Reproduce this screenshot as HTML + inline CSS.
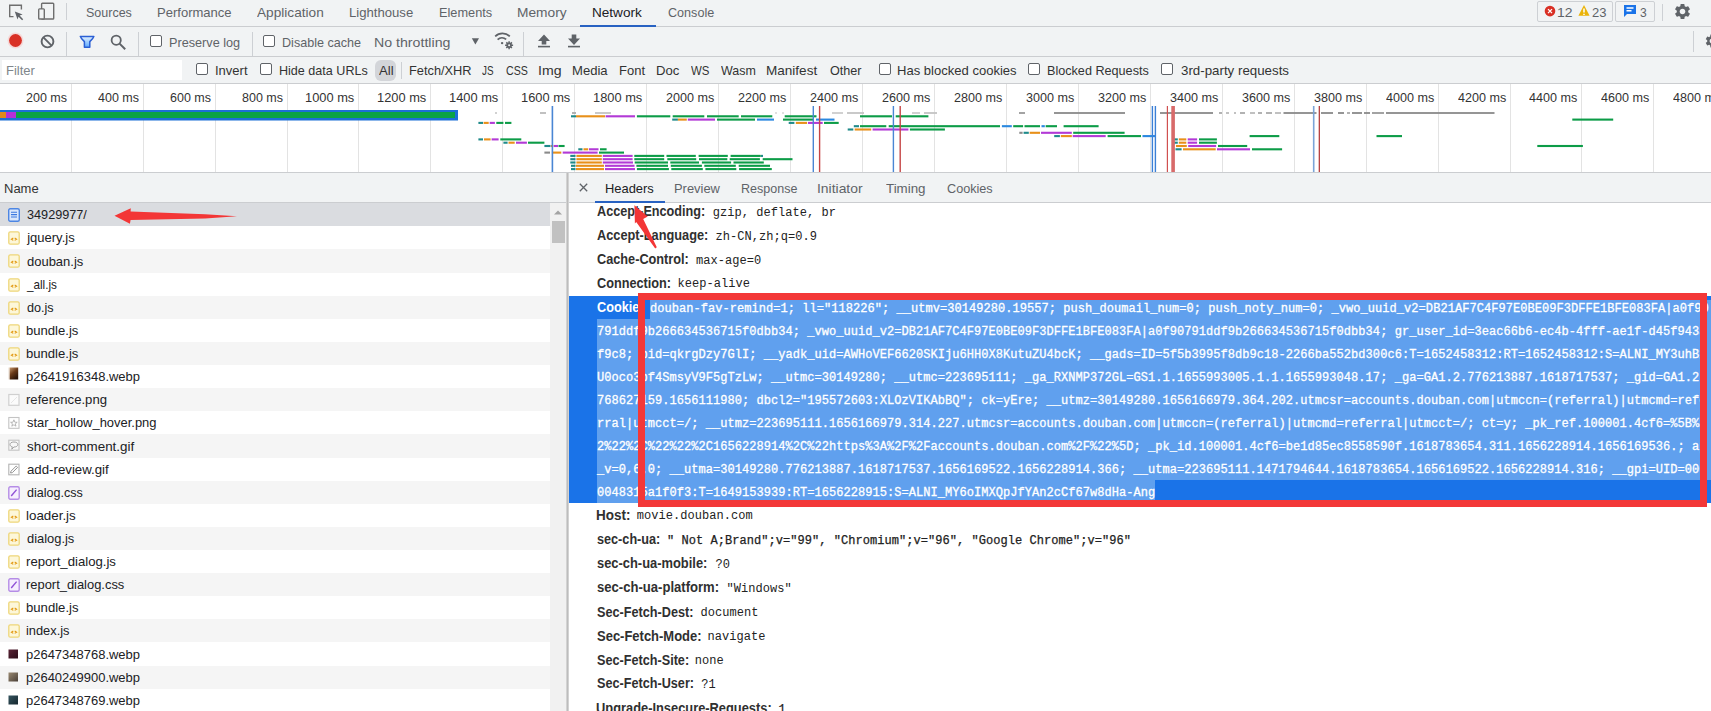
<!DOCTYPE html><html><head><meta charset="utf-8"><style>
html,body{margin:0;padding:0;width:1711px;height:711px;overflow:hidden;background:#fff;font-family:'Liberation Sans', sans-serif}
.t{position:absolute;white-space:nowrap;line-height:20px}
.r{position:absolute;box-sizing:content-box}
</style></head><body><div class="r" style="left:0px;top:0px;width:1711px;height:26px;background:#f1f3f4;"></div><div class="r" style="left:0px;top:26px;width:1711px;height:1px;background:#cbcdd0;"></div><svg class="r" style="left:0;top:0" width="30" height="26" viewBox="0 0 30 26">
<path d="M13.5 16.6 H9.7 V5.3 H21.4 V9.5" fill="none" stroke="#6e6e6e" stroke-width="1.4"/>
<path d="M14.8 11.5 L22.6 14.6 L19.6 15.6 L23.2 19.2 L22.1 20.3 L18.5 16.7 L17.5 19.6 Z" fill="#5f6368"/>
</svg><svg class="r" style="left:30px;top:0" width="30" height="26" viewBox="0 0 30 26">
<rect x="11.6" y="3.2" width="12.1" height="15.8" rx="0.8" fill="none" stroke="#6e6e6e" stroke-width="1.4"/>
<rect x="8.7" y="8.9" width="5.6" height="10.1" rx="0.8" fill="#f1f3f4" stroke="#6e6e6e" stroke-width="1.4"/>
</svg><div class="r" style="left:66px;top:3px;width:1px;height:17px;background:#cdd0d4;"></div><div class="t" style="left:85.74px;top:2.80px;font-size:13px;color:#5f6368;font-weight:normal;font-family:'Liberation Sans', sans-serif;transform:scaleX(0.9617);transform-origin:0 0;">Sources</div><div class="t" style="left:156.80px;top:2.80px;font-size:13px;color:#5f6368;font-weight:normal;font-family:'Liberation Sans', sans-serif;transform:scaleX(1.0027);transform-origin:0 0;">Performance</div><div class="t" style="left:256.80px;top:2.80px;font-size:13px;color:#5f6368;font-weight:normal;font-family:'Liberation Sans', sans-serif;transform:scaleX(1.0492);transform-origin:0 0;">Application</div><div class="t" style="left:348.69px;top:2.80px;font-size:13px;color:#5f6368;font-weight:normal;font-family:'Liberation Sans', sans-serif;transform:scaleX(1.0095);transform-origin:0 0;">Lighthouse</div><div class="t" style="left:439.22px;top:2.80px;font-size:13px;color:#5f6368;font-weight:normal;font-family:'Liberation Sans', sans-serif;transform:scaleX(0.9811);transform-origin:0 0;">Elements</div><div class="t" style="left:516.94px;top:2.80px;font-size:13px;color:#5f6368;font-weight:normal;font-family:'Liberation Sans', sans-serif;transform:scaleX(1.0565);transform-origin:0 0;">Memory</div><div class="t" style="left:591.96px;top:2.80px;font-size:13px;color:#202124;font-weight:normal;font-family:'Liberation Sans', sans-serif;transform:scaleX(1.0426);transform-origin:0 0;">Network</div><div class="t" style="left:668.30px;top:2.80px;font-size:13px;color:#5f6368;font-weight:normal;font-family:'Liberation Sans', sans-serif;transform:scaleX(0.9688);transform-origin:0 0;">Console</div><div class="r" style="left:580px;top:25px;width:76px;height:2px;background:#2862c2;"></div><div class="r" style="left:1537px;top:1px;width:74px;height:19px;border:1px solid #cdd0d4;border-radius:2px;background:#f1f3f4"></div><div class="r" style="left:1615px;top:1px;width:38px;height:19px;border:1px solid #cdd0d4;border-radius:2px;background:#f1f3f4"></div><svg class="r" style="left:1543px;top:5px" width="13" height="13" viewBox="0 0 13 13"><circle cx="7" cy="6.1" r="5.3" fill="#d93025"/><path d="M5 4.1 L9 8.1 M9 4.1 L5 8.1" stroke="#fff" stroke-width="1.3"/></svg><div class="t" style="left:1556.92px;top:2.50px;font-size:13px;color:#5f6368;font-weight:normal;font-family:'Liberation Sans', sans-serif;transform:scaleX(1.0769);transform-origin:0 0;">12</div><svg class="r" style="left:1577px;top:4px" width="14" height="13" viewBox="0 0 14 13"><path d="M7 1 L12.6 11.8 H1.4 Z" fill="#eab308"/><path d="M7 4.5 V8.5 M7 9.8 V11" stroke="#fff" stroke-width="1.5"/></svg><div class="t" style="left:1592.00px;top:2.50px;font-size:13px;color:#5f6368;font-weight:normal;font-family:'Liberation Sans', sans-serif;transform:scaleX(1.0000);transform-origin:0 0;">23</div><svg class="r" style="left:1623px;top:4px" width="14" height="14" viewBox="0 0 14 14"><path d="M1 1 H13 V10 H4 L1 13 Z" fill="#1a73e8"/><path d="M3.5 4 H10.5 M3.5 6.8 H8.5" stroke="#fff" stroke-width="1.4"/></svg><div class="t" style="left:1640.00px;top:2.50px;font-size:13px;color:#5f6368;font-weight:normal;font-family:'Liberation Sans', sans-serif;transform:scaleX(0.9286);transform-origin:0 0;">3</div><div class="r" style="left:1662px;top:4px;width:1px;height:17px;background:#cdd0d4;"></div><svg class="r" style="left:1673px;top:2px" width="19" height="19" viewBox="0 0 24 24"><path fill="#5f6368" d="M19.14 12.94c.04-.3.06-.61.06-.94 0-.32-.02-.64-.07-.94l2.03-1.58a.49.49 0 0 0 .12-.61l-1.92-3.32a.488.488 0 0 0-.59-.22l-2.39.96c-.5-.38-1.03-.7-1.62-.94l-.36-2.54a.484.484 0 0 0-.48-.41h-3.84c-.24 0-.43.17-.47.41l-.36 2.54c-.59.24-1.13.57-1.62.94l-2.39-.96c-.22-.08-.47 0-.59.22L2.74 8.87c-.12.21-.08.47.12.61l2.03 1.58c-.05.3-.09.63-.09.94s.02.64.07.94l-2.03 1.58a.49.49 0 0 0-.12.61l1.92 3.32c.12.22.37.29.59.22l2.39-.96c.5.38 1.03.7 1.62.94l.36 2.54c.05.24.24.41.48.41h3.84c.24 0 .44-.17.47-.41l.36-2.54c.59-.24 1.13-.56 1.62-.94l2.39.96c.22.08.47 0 .59-.22l1.92-3.32c.12-.22.07-.47-.12-.61l-2.01-1.58zM12 15.6c-1.98 0-3.6-1.62-3.6-3.6s1.62-3.6 3.6-3.6 3.6 1.62 3.6 3.6-1.62 3.6-3.6 3.6z"/></svg><div class="r" style="left:0px;top:27px;width:1711px;height:29px;background:#f1f3f4;"></div><div class="r" style="left:0px;top:56px;width:1711px;height:1px;background:#cbcdd0;"></div><svg class="r" style="left:7px;top:32px" width="17" height="17" viewBox="0 0 17 17"><circle cx="8.5" cy="8.5" r="8" fill="#f8c8c6" opacity="0.6"/><circle cx="8.5" cy="8.5" r="6.4" fill="#d93025"/></svg><svg class="r" style="left:38.5px;top:32.5px" width="17" height="17" viewBox="0 0 17 17"><circle cx="8.5" cy="8.5" r="5.9" fill="none" stroke="#5f6368" stroke-width="1.9"/><path d="M4.4 4.4 L12.6 12.6" stroke="#5f6368" stroke-width="1.9"/></svg><div class="r" style="left:66px;top:32px;width:1px;height:24px;background:#cdd0d4;"></div><svg class="r" style="left:79px;top:35px" width="16" height="14" viewBox="0 0 16 14"><defs><linearGradient id="fg" x1="0" y1="0" x2="0" y2="1"><stop offset="0" stop-color="#e4f2ff"/><stop offset="1" stop-color="#5aa8ff"/></linearGradient></defs><path d="M1.3 1.4 H14.9 C14.4 3.2 12.6 5 10.8 6.6 V12.3 H5.4 V6.6 C3.6 5 1.8 3.2 1.3 1.4 Z" fill="url(#fg)" stroke="#2b5fd4" stroke-width="1.5" stroke-linejoin="round"/></svg><svg class="r" style="left:109.5px;top:34px" width="17" height="16" viewBox="0 0 17 16"><circle cx="6.2" cy="6.2" r="4.6" fill="none" stroke="#5f6368" stroke-width="1.8"/><path d="M9.6 9.6 L15.2 15.2" stroke="#5f6368" stroke-width="2"/></svg><div class="r" style="left:138px;top:32px;width:1px;height:24px;background:#cdd0d4;"></div><div class="r" style="left:150px;top:35px;width:10px;height:10px;border:1px solid #5f6368;border-radius:2px;background:#fff"></div><div class="t" style="left:169.22px;top:32.50px;font-size:13px;color:#5f6368;font-weight:normal;font-family:'Liberation Sans', sans-serif;transform:scaleX(0.9750);transform-origin:0 0;">Preserve log</div><div class="r" style="left:252px;top:32px;width:1px;height:24px;background:#cdd0d4;"></div><div class="r" style="left:263px;top:35px;width:10px;height:10px;border:1px solid #5f6368;border-radius:2px;background:#fff"></div><div class="t" style="left:282.43px;top:32.50px;font-size:13px;color:#5f6368;font-weight:normal;font-family:'Liberation Sans', sans-serif;transform:scaleX(0.9679);transform-origin:0 0;">Disable cache</div><div class="t" style="left:374.01px;top:32.50px;font-size:13px;color:#5f6368;font-weight:normal;font-family:'Liberation Sans', sans-serif;transform:scaleX(1.0899);transform-origin:0 0;">No throttling</div><svg class="r" style="left:471px;top:38px" width="9" height="8" viewBox="0 0 9 8"><path d="M0.8 0.3 H8 L4.4 6.6 Z" fill="#5f6368"/></svg><svg class="r" style="left:490px;top:30px" width="26" height="22" viewBox="0 0 26 22">
<path d="M5.2 6.3 A10.5 10.5 0 0 1 19.8 6.3" fill="none" stroke="#5f6368" stroke-width="1.7"/>
<path d="M7.6 9.6 A6.5 6.5 0 0 1 16.2 9.4" fill="none" stroke="#5f6368" stroke-width="1.7"/>
<circle cx="12.1" cy="13.1" r="1.2" fill="#5f6368"/>
<g transform="translate(19.1 15.2)"><circle r="2.7" fill="#5f6368"/><path d="M0 -4 V4 M-4 0 H4 M-2.8 -2.8 L2.8 2.8 M2.8 -2.8 L-2.8 2.8" stroke="#5f6368" stroke-width="1.5"/><circle r="1" fill="#f1f3f4"/></g>
</svg><div class="r" style="left:523px;top:32px;width:1px;height:24px;background:#cdd0d4;"></div><svg class="r" style="left:537px;top:34px" width="14" height="14" viewBox="0 0 14 14"><path d="M7 0.5 L13 7 H9.3 V10.5 H4.7 V7 H1 Z" fill="#5f6368"/><rect x="1" y="11.8" width="12" height="1.6" fill="#5f6368"/></svg><svg class="r" style="left:567px;top:34px" width="14" height="14" viewBox="0 0 14 14"><path d="M4.7 0.5 H9.3 V4.5 H13 L7 11 L1 4.5 H4.7 Z" fill="#5f6368"/><rect x="1" y="11.8" width="12" height="1.6" fill="#5f6368"/></svg><div class="r" style="left:1693px;top:31px;width:1px;height:21px;background:#cdd0d4;"></div><svg class="r" style="left:1704px;top:33px" width="16" height="16" viewBox="0 0 24 24"><path fill="#5f6368" d="M19.14 12.94c.04-.3.06-.61.06-.94 0-.32-.02-.64-.07-.94l2.03-1.58a.49.49 0 0 0 .12-.61l-1.92-3.32a.488.488 0 0 0-.59-.22l-2.39.96c-.5-.38-1.030-.7-1.62-.94l-.36-2.54a.484.484 0 0 0-.48-.41h-3.84c-.24 0-.43.17-.47.41l-.36 2.54c-.59.24-1.13.57-1.62.94l-2.39-.96c-.22-.08-.47 0-.59.22L2.74 8.87c-.12.21-.08.47.12.61l2.03 1.58c-.05.3-.09.63-.09.94s.02.64.07.94l-2.03 1.58a.49.49 0 0 0-.12.61l1.920 3.32c.12.22.37.29.59.22l2.39-.96c.5.38 1.03.7 1.62.94l.36 2.54c.05.24.24.41.48.41h3.84c.24 0 .44-.17.47-.41l.36-2.54c.59-.24 1.13-.56 1.62-.94l2.39.96c.22.08.47 0 .59-.22l1.92-3.32c.12-.22.07-.47-.12-.61l-2.01-1.58zM12 15.6c-1.98 0-3.6-1.62-3.6-3.6s1.62-3.6 3.6-3.6 3.6 1.62 3.6 3.6-1.62 3.6-3.6 3.6z"/></svg><div class="r" style="left:0px;top:57px;width:1711px;height:26px;background:#f1f3f4;"></div><div class="r" style="left:0px;top:83px;width:1711px;height:1px;background:#cbcdd0;"></div><div class="r" style="left:2px;top:60px;width:180px;height:20px;background:#ffffff;"></div><div class="t" style="left:6.00px;top:60.50px;font-size:13px;color:#80868b;font-weight:normal;font-family:'Liberation Sans', sans-serif;">Filter</div><div class="r" style="left:196px;top:63px;width:10px;height:10px;border:1px solid #5f6368;border-radius:2px;background:#fff"></div><div class="t" style="left:215.00px;top:60.50px;font-size:13px;color:#333;font-weight:normal;font-family:'Liberation Sans', sans-serif;transform:scaleX(1.0000);transform-origin:0 0;">Invert</div><div class="r" style="left:260px;top:63px;width:10px;height:10px;border:1px solid #5f6368;border-radius:2px;background:#fff"></div><div class="t" style="left:279.03px;top:60.50px;font-size:13px;color:#333;font-weight:normal;font-family:'Liberation Sans', sans-serif;transform:scaleX(0.9670);transform-origin:0 0;">Hide data URLs</div><div class="r" style="left:375px;top:60px;width:21px;height:21px;border-radius:6px;background:#d3d5d9"></div><div class="t" style="left:378.60px;top:60.50px;font-size:13px;color:#333;font-weight:normal;font-family:'Liberation Sans', sans-serif;transform:scaleX(1.0071);transform-origin:0 0;">All</div><div class="r" style="left:401px;top:62px;width:1px;height:17px;background:#cdd0d4;"></div><div class="t" style="left:409.02px;top:60.50px;font-size:13px;color:#333;font-weight:normal;font-family:'Liberation Sans', sans-serif;transform:scaleX(0.9839);transform-origin:0 0;">Fetch/XHR</div><div class="t" style="left:482.40px;top:60.50px;font-size:13px;color:#333;font-weight:normal;font-family:'Liberation Sans', sans-serif;transform:scaleX(0.7600);transform-origin:0 0;">JS</div><div class="t" style="left:505.70px;top:60.50px;font-size:13px;color:#333;font-weight:normal;font-family:'Liberation Sans', sans-serif;transform:scaleX(0.8192);transform-origin:0 0;">CSS</div><div class="t" style="left:537.71px;top:60.50px;font-size:13px;color:#333;font-weight:normal;font-family:'Liberation Sans', sans-serif;transform:scaleX(1.0850);transform-origin:0 0;">Img</div><div class="t" style="left:571.79px;top:60.50px;font-size:13px;color:#333;font-weight:normal;font-family:'Liberation Sans', sans-serif;transform:scaleX(1.0057);transform-origin:0 0;">Media</div><div class="t" style="left:619.00px;top:60.50px;font-size:13px;color:#333;font-weight:normal;font-family:'Liberation Sans', sans-serif;transform:scaleX(1.0000);transform-origin:0 0;">Font</div><div class="t" style="left:655.79px;top:60.50px;font-size:13px;color:#333;font-weight:normal;font-family:'Liberation Sans', sans-serif;transform:scaleX(1.0091);transform-origin:0 0;">Doc</div><div class="t" style="left:691.00px;top:60.50px;font-size:13px;color:#333;font-weight:normal;font-family:'Liberation Sans', sans-serif;transform:scaleX(0.8810);transform-origin:0 0;">WS</div><div class="t" style="left:721.00px;top:60.50px;font-size:13px;color:#333;font-weight:normal;font-family:'Liberation Sans', sans-serif;transform:scaleX(0.9583);transform-origin:0 0;">Wasm</div><div class="t" style="left:765.96px;top:60.50px;font-size:13px;color:#333;font-weight:normal;font-family:'Liberation Sans', sans-serif;transform:scaleX(1.0417);transform-origin:0 0;">Manifest</div><div class="t" style="left:830.00px;top:60.50px;font-size:13px;color:#333;font-weight:normal;font-family:'Liberation Sans', sans-serif;transform:scaleX(0.9697);transform-origin:0 0;">Other</div><div class="r" style="left:879px;top:63px;width:10px;height:10px;border:1px solid #5f6368;border-radius:2px;background:#fff"></div><div class="t" style="left:897.30px;top:60.50px;font-size:13px;color:#333;font-weight:normal;font-family:'Liberation Sans', sans-serif;transform:scaleX(1.0034);transform-origin:0 0;">Has blocked cookies</div><div class="r" style="left:1028px;top:63px;width:10px;height:10px;border:1px solid #5f6368;border-radius:2px;background:#fff"></div><div class="t" style="left:1047.03px;top:60.50px;font-size:13px;color:#333;font-weight:normal;font-family:'Liberation Sans', sans-serif;transform:scaleX(0.9712);transform-origin:0 0;">Blocked Requests</div><div class="r" style="left:1161px;top:63px;width:10px;height:10px;border:1px solid #5f6368;border-radius:2px;background:#fff"></div><div class="t" style="left:1180.50px;top:60.50px;font-size:13px;color:#333;font-weight:normal;font-family:'Liberation Sans', sans-serif;transform:scaleX(1.0238);transform-origin:0 0;">3rd-party requests</div><div class="r" style="left:0px;top:84px;width:1711px;height:89px;background:#ffffff;"></div><div class="r" style="left:71px;top:84px;width:1px;height:89px;background:#e3e3e3;"></div><div class="t" style="left:26.30px;top:87.80px;font-size:13px;color:#333;font-weight:normal;font-family:'Liberation Sans', sans-serif;transform:scaleX(0.9605);transform-origin:0 0;">200 ms</div><div class="r" style="left:143px;top:84px;width:1px;height:89px;background:#e3e3e3;"></div><div class="t" style="left:98.30px;top:87.80px;font-size:13px;color:#333;font-weight:normal;font-family:'Liberation Sans', sans-serif;transform:scaleX(0.9605);transform-origin:0 0;">400 ms</div><div class="r" style="left:215px;top:84px;width:1px;height:89px;background:#e3e3e3;"></div><div class="t" style="left:170.30px;top:87.80px;font-size:13px;color:#333;font-weight:normal;font-family:'Liberation Sans', sans-serif;transform:scaleX(0.9605);transform-origin:0 0;">600 ms</div><div class="r" style="left:287px;top:84px;width:1px;height:89px;background:#e3e3e3;"></div><div class="t" style="left:242.30px;top:87.80px;font-size:13px;color:#333;font-weight:normal;font-family:'Liberation Sans', sans-serif;transform:scaleX(0.9605);transform-origin:0 0;">800 ms</div><div class="r" style="left:358px;top:84px;width:1px;height:89px;background:#e3e3e3;"></div><div class="t" style="left:305.21px;top:87.80px;font-size:13px;color:#333;font-weight:normal;font-family:'Liberation Sans', sans-serif;transform:scaleX(0.9878);transform-origin:0 0;">1000 ms</div><div class="r" style="left:430px;top:84px;width:1px;height:89px;background:#e3e3e3;"></div><div class="t" style="left:377.21px;top:87.80px;font-size:13px;color:#333;font-weight:normal;font-family:'Liberation Sans', sans-serif;transform:scaleX(0.9878);transform-origin:0 0;">1200 ms</div><div class="r" style="left:502px;top:84px;width:1px;height:89px;background:#e3e3e3;"></div><div class="t" style="left:449.21px;top:87.80px;font-size:13px;color:#333;font-weight:normal;font-family:'Liberation Sans', sans-serif;transform:scaleX(0.9878);transform-origin:0 0;">1400 ms</div><div class="r" style="left:574px;top:84px;width:1px;height:89px;background:#e3e3e3;"></div><div class="t" style="left:521.21px;top:87.80px;font-size:13px;color:#333;font-weight:normal;font-family:'Liberation Sans', sans-serif;transform:scaleX(0.9878);transform-origin:0 0;">1600 ms</div><div class="r" style="left:646px;top:84px;width:1px;height:89px;background:#e3e3e3;"></div><div class="t" style="left:593.21px;top:87.80px;font-size:13px;color:#333;font-weight:normal;font-family:'Liberation Sans', sans-serif;transform:scaleX(0.9878);transform-origin:0 0;">1800 ms</div><div class="r" style="left:718px;top:84px;width:1px;height:89px;background:#e3e3e3;"></div><div class="t" style="left:666.20px;top:87.80px;font-size:13px;color:#333;font-weight:normal;font-family:'Liberation Sans', sans-serif;transform:scaleX(0.9680);transform-origin:0 0;">2000 ms</div><div class="r" style="left:790px;top:84px;width:1px;height:89px;background:#e3e3e3;"></div><div class="t" style="left:738.20px;top:87.80px;font-size:13px;color:#333;font-weight:normal;font-family:'Liberation Sans', sans-serif;transform:scaleX(0.9680);transform-origin:0 0;">2200 ms</div><div class="r" style="left:862px;top:84px;width:1px;height:89px;background:#e3e3e3;"></div><div class="t" style="left:810.20px;top:87.80px;font-size:13px;color:#333;font-weight:normal;font-family:'Liberation Sans', sans-serif;transform:scaleX(0.9680);transform-origin:0 0;">2400 ms</div><div class="r" style="left:934px;top:84px;width:1px;height:89px;background:#e3e3e3;"></div><div class="t" style="left:882.20px;top:87.80px;font-size:13px;color:#333;font-weight:normal;font-family:'Liberation Sans', sans-serif;transform:scaleX(0.9680);transform-origin:0 0;">2600 ms</div><div class="r" style="left:1006px;top:84px;width:1px;height:89px;background:#e3e3e3;"></div><div class="t" style="left:954.20px;top:87.80px;font-size:13px;color:#333;font-weight:normal;font-family:'Liberation Sans', sans-serif;transform:scaleX(0.9680);transform-origin:0 0;">2800 ms</div><div class="r" style="left:1078px;top:84px;width:1px;height:89px;background:#e3e3e3;"></div><div class="t" style="left:1026.20px;top:87.80px;font-size:13px;color:#333;font-weight:normal;font-family:'Liberation Sans', sans-serif;transform:scaleX(0.9680);transform-origin:0 0;">3000 ms</div><div class="r" style="left:1150px;top:84px;width:1px;height:89px;background:#e3e3e3;"></div><div class="t" style="left:1098.20px;top:87.80px;font-size:13px;color:#333;font-weight:normal;font-family:'Liberation Sans', sans-serif;transform:scaleX(0.9680);transform-origin:0 0;">3200 ms</div><div class="r" style="left:1222px;top:84px;width:1px;height:89px;background:#e3e3e3;"></div><div class="t" style="left:1170.20px;top:87.80px;font-size:13px;color:#333;font-weight:normal;font-family:'Liberation Sans', sans-serif;transform:scaleX(0.9680);transform-origin:0 0;">3400 ms</div><div class="r" style="left:1294px;top:84px;width:1px;height:89px;background:#e3e3e3;"></div><div class="t" style="left:1242.20px;top:87.80px;font-size:13px;color:#333;font-weight:normal;font-family:'Liberation Sans', sans-serif;transform:scaleX(0.9680);transform-origin:0 0;">3600 ms</div><div class="r" style="left:1366px;top:84px;width:1px;height:89px;background:#e3e3e3;"></div><div class="t" style="left:1314.20px;top:87.80px;font-size:13px;color:#333;font-weight:normal;font-family:'Liberation Sans', sans-serif;transform:scaleX(0.9680);transform-origin:0 0;">3800 ms</div><div class="r" style="left:1438px;top:84px;width:1px;height:89px;background:#e3e3e3;"></div><div class="t" style="left:1386.20px;top:87.80px;font-size:13px;color:#333;font-weight:normal;font-family:'Liberation Sans', sans-serif;transform:scaleX(0.9680);transform-origin:0 0;">4000 ms</div><div class="r" style="left:1510px;top:84px;width:1px;height:89px;background:#e3e3e3;"></div><div class="t" style="left:1458.20px;top:87.80px;font-size:13px;color:#333;font-weight:normal;font-family:'Liberation Sans', sans-serif;transform:scaleX(0.9680);transform-origin:0 0;">4200 ms</div><div class="r" style="left:1581px;top:84px;width:1px;height:89px;background:#e3e3e3;"></div><div class="t" style="left:1529.20px;top:87.80px;font-size:13px;color:#333;font-weight:normal;font-family:'Liberation Sans', sans-serif;transform:scaleX(0.9680);transform-origin:0 0;">4400 ms</div><div class="r" style="left:1653px;top:84px;width:1px;height:89px;background:#e3e3e3;"></div><div class="t" style="left:1601.20px;top:87.80px;font-size:13px;color:#333;font-weight:normal;font-family:'Liberation Sans', sans-serif;transform:scaleX(0.9680);transform-origin:0 0;">4600 ms</div><div class="r" style="left:1725px;top:84px;width:1px;height:89px;background:#e3e3e3;"></div><div class="t" style="left:1673.20px;top:87.80px;font-size:13px;color:#333;font-weight:normal;font-family:'Liberation Sans', sans-serif;transform:scaleX(0.9680);transform-origin:0 0;">4800 ms</div><svg class="r" style="left:0;top:84px" width="1711" height="88" viewBox="0 84 1711 88">
<rect x="0" y="110" width="458" height="10.5" fill="#1b6fd6"/>
<rect x="0" y="112" width="6" height="6" fill="#e08a1c"/>
<rect x="6" y="112" width="10" height="6" fill="#b52fd8"/>
<rect x="16" y="112" width="439" height="6" fill="#0aa344"/>
<rect x="495" y="112.10" width="2.00" height="1.8" fill="#ccc"/>
<rect x="540" y="112.10" width="6.00" height="1.8" fill="#bbb"/>
<rect x="572" y="112.10" width="4.00" height="1.8" fill="#aaa"/>
<rect x="595" y="112.10" width="16.00" height="1.8" fill="#c4c4c4"/>
<rect x="775" y="112.10" width="2.00" height="1.8" fill="#ddd"/>
<rect x="782" y="112.10" width="2.00" height="1.8" fill="#ddd"/>
<rect x="832" y="112.10" width="11.00" height="1.8" fill="#ccc"/>
<rect x="847" y="112.10" width="17.00" height="1.8" fill="#c4c4c4"/>
<rect x="912" y="112.10" width="8.00" height="1.8" fill="#ccc"/>
<rect x="924" y="112.10" width="13.00" height="1.8" fill="#c4c4c4"/>
<rect x="1019" y="112.10" width="6.00" height="1.8" fill="#999"/>
<rect x="1054" y="112.10" width="71.00" height="1.8" fill="#8a8a8a"/>
<rect x="1160" y="112.10" width="53.00" height="1.8" fill="#8a8a8a"/>
<rect x="1219" y="112.10" width="3.00" height="1.8" fill="#aaa"/>
<rect x="1226" y="112.10" width="3.00" height="1.8" fill="#bbb"/>
<rect x="1234" y="112.10" width="2.00" height="1.8" fill="#bbb"/>
<rect x="1240" y="112.10" width="5.00" height="1.8" fill="#aaa"/>
<rect x="1250" y="112.10" width="5.00" height="1.8" fill="#bbb"/>
<rect x="1258" y="112.10" width="4.00" height="1.8" fill="#aaa"/>
<rect x="1266" y="112.10" width="6.00" height="1.8" fill="#aaa"/>
<rect x="1275" y="112.10" width="6.00" height="1.8" fill="#bbb"/>
<rect x="1283.5" y="112.10" width="33.00" height="1.8" fill="#8a8a8a"/>
<rect x="1321" y="112.10" width="12.00" height="1.8" fill="#8a8a8a"/>
<rect x="1338" y="112.10" width="6.00" height="1.8" fill="#8a8a8a"/>
<rect x="1347" y="112.10" width="3.00" height="1.8" fill="#aaa"/>
<rect x="1352" y="112.10" width="10.00" height="1.8" fill="#8a8a8a"/>
<rect x="1364" y="112.10" width="6.00" height="1.8" fill="#8a8a8a"/>
<rect x="1372" y="112.10" width="12.00" height="1.8" fill="#999"/>
<rect x="1386" y="112.10" width="108.50" height="1.8" fill="#8a8a8a"/>
<rect x="571" y="115.25" width="5.00" height="2.1" fill="#1f8a8a"/>
<rect x="576" y="115.25" width="29.00" height="2.1" fill="#e8901a"/>
<rect x="605.6" y="115.25" width="29.40" height="2.1" fill="#b23ad6"/>
<rect x="636.9" y="115.25" width="33.40" height="2.1" fill="#0c9c47"/>
<rect x="672.7" y="115.25" width="31.60" height="2.1" fill="#0c9c47"/>
<rect x="707" y="115.25" width="31.70" height="2.1" fill="#0c9c47"/>
<rect x="741" y="115.25" width="31.30" height="2.1" fill="#0c9c47"/>
<rect x="784.7" y="115.25" width="31.80" height="2.1" fill="#0c9c47"/>
<rect x="860" y="115.25" width="32.00" height="2.1" fill="#0c9c47"/>
<rect x="895.7" y="115.25" width="32.70" height="2.1" fill="#0c9c47"/>
<rect x="672.2" y="118.55" width="5.70" height="2.1" fill="#1f8a8a"/>
<rect x="677.9" y="118.55" width="8.90" height="2.1" fill="#e8901a"/>
<rect x="687.8" y="118.55" width="27.20" height="2.1" fill="#b23ad6"/>
<rect x="717" y="118.55" width="38.00" height="2.1" fill="#0c9c47"/>
<rect x="757" y="118.55" width="17.00" height="2.1" fill="#2a88e0"/>
<rect x="783" y="118.55" width="30.70" height="2.1" fill="#0c9c47"/>
<rect x="816" y="118.55" width="18.50" height="2.1" fill="#2a88e0"/>
<rect x="1572.3" y="118.55" width="40.90" height="2.1" fill="#0c9c47"/>
<rect x="478.4" y="121.85" width="4.60" height="2.1" fill="#1f8a8a"/>
<rect x="483.6" y="121.85" width="5.10" height="2.1" fill="#e8901a"/>
<rect x="489.7" y="121.85" width="5.20" height="2.1" fill="#b23ad6"/>
<rect x="496.3" y="121.85" width="7.10" height="2.1" fill="#0c9c47"/>
<rect x="505" y="121.85" width="6.40" height="2.1" fill="#0c9c47"/>
<rect x="788.7" y="121.85" width="5.70" height="2.1" fill="#1f8a8a"/>
<rect x="795.8" y="121.85" width="11.30" height="2.1" fill="#e8901a"/>
<rect x="808" y="121.85" width="14.70" height="2.1" fill="#b23ad6"/>
<rect x="824" y="121.85" width="14.70" height="2.1" fill="#0c9c47"/>
<rect x="853.8" y="125.15" width="5.20" height="2.1" fill="#1f8a8a"/>
<rect x="860" y="125.15" width="26.30" height="2.1" fill="#0c9c47"/>
<rect x="888.7" y="125.15" width="111.30" height="2.1" fill="#0c9c47"/>
<rect x="1001.9" y="125.15" width="9.90" height="2.1" fill="#2a88e0"/>
<rect x="1013.2" y="125.15" width="9.90" height="2.1" fill="#0c9c47"/>
<rect x="1024.5" y="125.15" width="15.50" height="2.1" fill="#0c9c47"/>
<rect x="1041.5" y="125.15" width="3.30" height="2.1" fill="#2a88e0"/>
<rect x="1045.7" y="125.15" width="11.30" height="2.1" fill="#0c9c47"/>
<rect x="1063.6" y="125.15" width="35.00" height="2.1" fill="#0c9c47"/>
<rect x="847.7" y="128.45" width="5.60" height="2.1" fill="#1f8a8a"/>
<rect x="854.7" y="128.45" width="16.50" height="2.1" fill="#e8901a"/>
<rect x="872.6" y="128.45" width="35.80" height="2.1" fill="#b23ad6"/>
<rect x="909.9" y="128.45" width="35.00" height="2.1" fill="#0c9c47"/>
<rect x="1019.3" y="131.75" width="3.30" height="2.1" fill="#8a8a8a"/>
<rect x="1023.6" y="131.75" width="5.20" height="2.1" fill="#1f8a8a"/>
<rect x="1029.7" y="131.75" width="10.30" height="2.1" fill="#e8901a"/>
<rect x="1041" y="131.75" width="30.80" height="2.1" fill="#b23ad6"/>
<rect x="1073.2" y="131.75" width="51.40" height="2.1" fill="#0c9c47"/>
<rect x="1054.2" y="135.05" width="5.70" height="2.1" fill="#1f8a8a"/>
<rect x="1060.8" y="135.05" width="11.00" height="2.1" fill="#e8901a"/>
<rect x="1072.7" y="135.05" width="33.00" height="2.1" fill="#b23ad6"/>
<rect x="1107.6" y="135.05" width="33.40" height="2.1" fill="#0c9c47"/>
<rect x="1142.5" y="135.05" width="12.70" height="2.1" fill="#2a88e0"/>
<rect x="1249.6" y="135.05" width="29.70" height="2.1" fill="#0c9c47"/>
<rect x="1376.5" y="135.05" width="25.50" height="2.1" fill="#0c9c47"/>
<rect x="478.4" y="138.35" width="4.60" height="2.1" fill="#1f8a8a"/>
<rect x="484" y="138.35" width="6.60" height="2.1" fill="#e8901a"/>
<rect x="491.6" y="138.35" width="7.00" height="2.1" fill="#b23ad6"/>
<rect x="500.3" y="138.35" width="21.00" height="2.1" fill="#0c9c47"/>
<rect x="1174" y="138.35" width="3.80" height="2.1" fill="#1f8a8a"/>
<rect x="1178.8" y="138.35" width="7.50" height="2.1" fill="#e8901a"/>
<rect x="1187.7" y="138.35" width="9.40" height="2.1" fill="#b23ad6"/>
<rect x="1199" y="138.35" width="17.90" height="2.1" fill="#0c9c47"/>
<rect x="503.4" y="141.65" width="4.20" height="2.1" fill="#1f8a8a"/>
<rect x="508.5" y="141.65" width="6.20" height="2.1" fill="#e8901a"/>
<rect x="516" y="141.65" width="10.90" height="2.1" fill="#b23ad6"/>
<rect x="528" y="141.65" width="16.40" height="2.1" fill="#0c9c47"/>
<rect x="1174" y="141.65" width="3.80" height="2.1" fill="#1f8a8a"/>
<rect x="1178.8" y="141.65" width="7.50" height="2.1" fill="#e8901a"/>
<rect x="1187.7" y="141.65" width="9.40" height="2.1" fill="#b23ad6"/>
<rect x="1199" y="141.65" width="17.90" height="2.1" fill="#0c9c47"/>
<rect x="544.4" y="144.95" width="6.10" height="2.1" fill="#1f8a8a"/>
<rect x="551" y="144.95" width="2.30" height="2.1" fill="#e8901a"/>
<rect x="553.8" y="144.95" width="4.20" height="2.1" fill="#b23ad6"/>
<rect x="558.5" y="144.95" width="6.10" height="2.1" fill="#0c9c47"/>
<rect x="1176" y="144.95" width="10.80" height="2.1" fill="#e8901a"/>
<rect x="1188.2" y="144.95" width="27.90" height="2.1" fill="#b23ad6"/>
<rect x="1218" y="144.95" width="29.20" height="2.1" fill="#0c9c47"/>
<rect x="1537.3" y="144.95" width="45.60" height="2.1" fill="#0c9c47"/>
<rect x="578.3" y="148.25" width="4.20" height="2.1" fill="#1f8a8a"/>
<rect x="583.5" y="148.25" width="4.70" height="2.1" fill="#e8901a"/>
<rect x="589" y="148.25" width="9.50" height="2.1" fill="#b23ad6"/>
<rect x="600" y="148.25" width="6.60" height="2.1" fill="#0c9c47"/>
<rect x="1175.5" y="148.25" width="6.10" height="2.1" fill="#1f8a8a"/>
<rect x="1183" y="148.25" width="32.70" height="2.1" fill="#e8901a"/>
<rect x="1217" y="148.25" width="33.00" height="2.1" fill="#b23ad6"/>
<rect x="1252" y="148.25" width="30.10" height="2.1" fill="#0c9c47"/>
<rect x="544.4" y="151.55" width="5.60" height="2.1" fill="#8a8a8a"/>
<rect x="551.9" y="151.55" width="9.40" height="2.1" fill="#e8901a"/>
<rect x="562.7" y="151.55" width="34.90" height="2.1" fill="#b23ad6"/>
<rect x="599" y="151.55" width="25.00" height="2.1" fill="#0c9c47"/>
<rect x="570.3" y="154.85" width="5.20" height="2.1" fill="#1f8a8a"/>
<rect x="576.4" y="154.85" width="25.40" height="2.1" fill="#e8901a"/>
<rect x="602.8" y="154.85" width="29.80" height="2.1" fill="#b23ad6"/>
<rect x="634.3" y="154.85" width="29.90" height="2.1" fill="#0c9c47"/>
<rect x="666.5" y="154.85" width="29.30" height="2.1" fill="#0c9c47"/>
<rect x="698.6" y="154.85" width="29.20" height="2.1" fill="#0c9c47"/>
<rect x="730.6" y="154.85" width="30.20" height="2.1" fill="#0c9c47"/>
<rect x="761" y="154.85" width="2.00" height="2.1" fill="#1f8a8a"/>
<rect x="570.3" y="158.15" width="5.20" height="2.1" fill="#1f8a8a"/>
<rect x="576.4" y="158.15" width="25.40" height="2.1" fill="#e8901a"/>
<rect x="602.8" y="158.15" width="29.80" height="2.1" fill="#b23ad6"/>
<rect x="634.3" y="158.15" width="29.90" height="2.1" fill="#0c9c47"/>
<rect x="667.3" y="158.15" width="28.90" height="2.1" fill="#0c9c47"/>
<rect x="699" y="158.15" width="28.30" height="2.1" fill="#0c9c47"/>
<rect x="729.7" y="158.15" width="30.20" height="2.1" fill="#0c9c47"/>
<rect x="762.7" y="158.15" width="29.80" height="2.1" fill="#0c9c47"/>
<rect x="570.3" y="161.45" width="5.20" height="2.1" fill="#1f8a8a"/>
<rect x="576.4" y="161.45" width="25.40" height="2.1" fill="#e8901a"/>
<rect x="602.8" y="161.45" width="30.20" height="2.1" fill="#b23ad6"/>
<rect x="634.7" y="161.45" width="33.30" height="2.1" fill="#0c9c47"/>
<rect x="670.3" y="161.45" width="28.70" height="2.1" fill="#0c9c47"/>
<rect x="701.9" y="161.45" width="29.20" height="2.1" fill="#0c9c47"/>
<rect x="733.5" y="161.45" width="30.30" height="2.1" fill="#0c9c47"/>
<rect x="571" y="164.75" width="4.50" height="2.1" fill="#1f8a8a"/>
<rect x="576" y="164.75" width="28.00" height="2.1" fill="#e8901a"/>
<rect x="605" y="164.75" width="29.50" height="2.1" fill="#b23ad6"/>
<rect x="636.4" y="164.75" width="31.60" height="2.1" fill="#0c9c47"/>
<rect x="670.8" y="164.75" width="31.10" height="2.1" fill="#0c9c47"/>
<rect x="704.3" y="164.75" width="31.50" height="2.1" fill="#0c9c47"/>
<rect x="738.7" y="164.75" width="31.30" height="2.1" fill="#0c9c47"/>
<rect x="571" y="168.05" width="4.50" height="2.1" fill="#1f8a8a"/>
<rect x="576" y="168.05" width="28.00" height="2.1" fill="#e8901a"/>
<rect x="605" y="168.05" width="30.00" height="2.1" fill="#b23ad6"/>
<rect x="636.9" y="168.05" width="32.00" height="2.1" fill="#0c9c47"/>
<rect x="671.3" y="168.05" width="31.50" height="2.1" fill="#0c9c47"/>
<rect x="705.4" y="168.05" width="30.90" height="2.1" fill="#0c9c47"/>
<rect x="739.1" y="168.05" width="32.70" height="2.1" fill="#0c9c47"/>
<rect x="551.60" y="106" width="1.6" height="66" fill="#4a86d4"/>
<rect x="812.60" y="106" width="1.4" height="66" fill="#4a86d4"/>
<rect x="818.90" y="106" width="1.4" height="66" fill="#c64545"/>
<rect x="892.70" y="106" width="1.4" height="66" fill="#4a86d4"/>
<rect x="899.50" y="106" width="1.4" height="66" fill="#c64545"/>
<rect x="1151.70" y="106" width="1.4" height="66" fill="#3a7fd6"/>
<rect x="1154.70" y="106" width="1.4" height="66" fill="#3a7fd6"/>
<rect x="1166.80" y="106" width="1.2" height="66" fill="#d05050"/>
<rect x="1171.30" y="106" width="3.6" height="66" fill="#d86a6a"/>
<rect x="1312.90" y="106" width="1.6" height="66" fill="#7ba4d8"/>
<rect x="1318.70" y="106" width="1.2" height="66" fill="#b03030"/>
</svg><div class="r" style="left:0px;top:172px;width:1711px;height:1px;background:#cbcdd0;"></div><div class="r" style="left:0px;top:173px;width:568px;height:30px;background:#f1f3f4;"></div><div class="r" style="left:0px;top:202px;width:568px;height:1px;background:#cbcdd0;"></div><div class="t" style="left:4.00px;top:178.50px;font-size:13px;color:#333;font-weight:normal;font-family:'Liberation Sans', sans-serif;">Name</div><div class="r" style="left:0;top:203.20px;width:550px;height:23.42px;background:#dadce0"></div><div class="t" style="left:26.80px;top:205.30px;font-size:13px;color:#202124;font-weight:normal;font-family:'Liberation Sans', sans-serif;transform:scaleX(0.9742);transform-origin:0 0;">34929977/</div><svg class="r" style="left:7.5px;top:208.20px" width="12" height="14" viewBox="0 0 12 14"><rect x="0.7" y="0.7" width="10.6" height="12.6" rx="1.5" fill="#dbe7fb" stroke="#4d86e3" stroke-width="1.4"/><path d="M3 4.2 H9 M3 6.6 H9 M3 9 H9" stroke="#3b78e0" stroke-width="1.1"/></svg><div class="r" style="left:0;top:226.32px;width:550px;height:23.42px;background:#ffffff"></div><div class="t" style="left:27.20px;top:228.42px;font-size:13px;color:#202124;font-weight:normal;font-family:'Liberation Sans', sans-serif;transform:scaleX(1.0000);transform-origin:0 0;">jquery.js</div><svg class="r" style="left:7.5px;top:231.32px" width="12" height="14" viewBox="0 0 12 14"><rect x="0.8" y="0.8" width="10.4" height="12.4" rx="1.5" fill="#fdf7d9" stroke="#eed67a" stroke-width="1.3"/><path d="M5.3 7 L3.4 8.2 L5.3 9.4 M6.7 7 L8.6 8.2 L6.7 9.4" fill="none" stroke="#e39b16" stroke-width="1.1"/></svg><div class="r" style="left:0;top:249.44px;width:550px;height:23.42px;background:#f5f5f5"></div><div class="t" style="left:26.80px;top:251.54px;font-size:13px;color:#202124;font-weight:normal;font-family:'Liberation Sans', sans-serif;transform:scaleX(0.9982);transform-origin:0 0;">douban.js</div><svg class="r" style="left:7.5px;top:254.44px" width="12" height="14" viewBox="0 0 12 14"><rect x="0.8" y="0.8" width="10.4" height="12.4" rx="1.5" fill="#fdf7d9" stroke="#eed67a" stroke-width="1.3"/><path d="M5.3 7 L3.4 8.2 L5.3 9.4 M6.7 7 L8.6 8.2 L6.7 9.4" fill="none" stroke="#e39b16" stroke-width="1.1"/></svg><div class="r" style="left:0;top:272.56px;width:550px;height:23.42px;background:#ffffff"></div><div class="t" style="left:26.80px;top:274.66px;font-size:13px;color:#202124;font-weight:normal;font-family:'Liberation Sans', sans-serif;transform:scaleX(0.9000);transform-origin:0 0;">_all.js</div><svg class="r" style="left:7.5px;top:277.56px" width="12" height="14" viewBox="0 0 12 14"><rect x="0.8" y="0.8" width="10.4" height="12.4" rx="1.5" fill="#fdf7d9" stroke="#eed67a" stroke-width="1.3"/><path d="M5.3 7 L3.4 8.2 L5.3 9.4 M6.7 7 L8.6 8.2 L6.7 9.4" fill="none" stroke="#e39b16" stroke-width="1.1"/></svg><div class="r" style="left:0;top:295.68px;width:550px;height:23.42px;background:#f5f5f5"></div><div class="t" style="left:26.80px;top:297.78px;font-size:13px;color:#202124;font-weight:normal;font-family:'Liberation Sans', sans-serif;transform:scaleX(0.9704);transform-origin:0 0;">do.js</div><svg class="r" style="left:7.5px;top:300.68px" width="12" height="14" viewBox="0 0 12 14"><rect x="0.8" y="0.8" width="10.4" height="12.4" rx="1.5" fill="#fdf7d9" stroke="#eed67a" stroke-width="1.3"/><path d="M5.3 7 L3.4 8.2 L5.3 9.4 M6.7 7 L8.6 8.2 L6.7 9.4" fill="none" stroke="#e39b16" stroke-width="1.1"/></svg><div class="r" style="left:0;top:318.80px;width:550px;height:23.42px;background:#ffffff"></div><div class="t" style="left:25.79px;top:320.90px;font-size:13px;color:#202124;font-weight:normal;font-family:'Liberation Sans', sans-serif;transform:scaleX(1.0059);transform-origin:0 0;">bundle.js</div><svg class="r" style="left:7.5px;top:323.80px" width="12" height="14" viewBox="0 0 12 14"><rect x="0.8" y="0.8" width="10.4" height="12.4" rx="1.5" fill="#fdf7d9" stroke="#eed67a" stroke-width="1.3"/><path d="M5.3 7 L3.4 8.2 L5.3 9.4 M6.7 7 L8.6 8.2 L6.7 9.4" fill="none" stroke="#e39b16" stroke-width="1.1"/></svg><div class="r" style="left:0;top:341.92px;width:550px;height:23.42px;background:#f5f5f5"></div><div class="t" style="left:25.79px;top:344.02px;font-size:13px;color:#202124;font-weight:normal;font-family:'Liberation Sans', sans-serif;transform:scaleX(1.0059);transform-origin:0 0;">bundle.js</div><svg class="r" style="left:7.5px;top:346.92px" width="12" height="14" viewBox="0 0 12 14"><rect x="0.8" y="0.8" width="10.4" height="12.4" rx="1.5" fill="#fdf7d9" stroke="#eed67a" stroke-width="1.3"/><path d="M5.3 7 L3.4 8.2 L5.3 9.4 M6.7 7 L8.6 8.2 L6.7 9.4" fill="none" stroke="#e39b16" stroke-width="1.1"/></svg><div class="r" style="left:0;top:365.04px;width:550px;height:23.42px;background:#ffffff"></div><div class="t" style="left:25.80px;top:367.14px;font-size:13px;color:#202124;font-weight:normal;font-family:'Liberation Sans', sans-serif;transform:scaleX(0.9982);transform-origin:0 0;">p2641916348.webp</div><svg class="r" style="left:8px;top:367.44px" width="11" height="13" viewBox="0 0 11 13"><defs><linearGradient id="g1" x1="0" y1="0" x2="0.6" y2="1"><stop offset="0" stop-color="#c69a70"/><stop offset="0.5" stop-color="#6a3a18"/><stop offset="1" stop-color="#2a1408"/></linearGradient></defs><rect x="0.5" y="0.5" width="1.2" height="12" fill="#e8dccf"/><rect x="1.7" y="0.5" width="8.5" height="12" fill="url(#g1)"/></svg><div class="r" style="left:0;top:388.16px;width:550px;height:23.42px;background:#f5f5f5"></div><div class="t" style="left:25.79px;top:390.26px;font-size:13px;color:#202124;font-weight:normal;font-family:'Liberation Sans', sans-serif;transform:scaleX(1.0101);transform-origin:0 0;">reference.png</div><svg class="r" style="left:7.5px;top:393.16px" width="12" height="14" viewBox="0 0 12 14"><rect x="0.8" y="1.5" width="10.2" height="10.8" fill="#fbfbfb" stroke="#d0d0d0" stroke-width="1.2"/><path d="M3 10 L9 4" stroke="#e6e6e6" stroke-width="1"/></svg><div class="r" style="left:0;top:411.28px;width:550px;height:23.42px;background:#ffffff"></div><div class="t" style="left:26.80px;top:413.38px;font-size:13px;color:#202124;font-weight:normal;font-family:'Liberation Sans', sans-serif;transform:scaleX(0.9954);transform-origin:0 0;">star_hollow_hover.png</div><svg class="r" style="left:7.5px;top:416.28px" width="12" height="14" viewBox="0 0 12 14"><rect x="0.8" y="1.5" width="10.2" height="10.8" fill="#fff" stroke="#c4c4c4" stroke-width="1.1"/><path d="M5.9 3.8 L6.8 6.2 L9.2 6.3 L7.3 7.8 L8 10.2 L5.9 8.8 L3.8 10.2 L4.5 7.8 L2.6 6.3 L5 6.2 Z" fill="none" stroke="#a8a8a8" stroke-width="0.8"/></svg><div class="r" style="left:0;top:434.40px;width:550px;height:23.42px;background:#f5f5f5"></div><div class="t" style="left:26.80px;top:436.50px;font-size:13px;color:#202124;font-weight:normal;font-family:'Liberation Sans', sans-serif;transform:scaleX(1.0305);transform-origin:0 0;">short-comment.gif</div><svg class="r" style="left:7.5px;top:439.40px" width="12" height="14" viewBox="0 0 12 14"><rect x="0.8" y="1.2" width="10.2" height="10" fill="#f8f8f8" stroke="#c4c4c4" stroke-width="1.1"/><path d="M5.9 3 C8.6 3 9.8 4.2 9.8 5.6 C9.8 7 8.4 8 5.9 8 L3.8 10.2 L4.3 7.8 C2.8 7.4 2 6.6 2 5.6 C2 4.2 3.3 3 5.9 3 Z" fill="none" stroke="#9a9a9a" stroke-width="0.9"/></svg><div class="r" style="left:0;top:457.52px;width:550px;height:23.42px;background:#ffffff"></div><div class="t" style="left:26.80px;top:459.62px;font-size:13px;color:#202124;font-weight:normal;font-family:'Liberation Sans', sans-serif;transform:scaleX(1.0185);transform-origin:0 0;">add-review.gif</div><svg class="r" style="left:7.5px;top:462.52px" width="12" height="14" viewBox="0 0 12 14"><rect x="0.8" y="1.2" width="10.2" height="10.6" fill="#fff" stroke="#b4b4b4" stroke-width="1.1"/><path d="M2.6 10 L3 8.2 L8.2 3 L9.6 4.4 L4.4 9.6 Z" fill="none" stroke="#8a8a8a" stroke-width="0.9"/></svg><div class="r" style="left:0;top:480.64px;width:550px;height:23.42px;background:#f5f5f5"></div><div class="t" style="left:26.80px;top:482.74px;font-size:13px;color:#202124;font-weight:normal;font-family:'Liberation Sans', sans-serif;transform:scaleX(0.9638);transform-origin:0 0;">dialog.css</div><svg class="r" style="left:7.5px;top:485.64px" width="12" height="14" viewBox="0 0 12 14"><rect x="0.8" y="0.8" width="10.4" height="12.4" rx="1.5" fill="#f6eefe" stroke="#b58de6" stroke-width="1.4"/><path d="M3.2 10 L8.6 3.6" stroke="#8f4fd6" stroke-width="1.4"/></svg><div class="r" style="left:0;top:503.76px;width:550px;height:23.42px;background:#ffffff"></div><div class="t" style="left:25.77px;top:505.86px;font-size:13px;color:#202124;font-weight:normal;font-family:'Liberation Sans', sans-serif;transform:scaleX(1.0277);transform-origin:0 0;">loader.js</div><svg class="r" style="left:7.5px;top:508.76px" width="12" height="14" viewBox="0 0 12 14"><rect x="0.8" y="0.8" width="10.4" height="12.4" rx="1.5" fill="#fdf7d9" stroke="#eed67a" stroke-width="1.3"/><path d="M5.3 7 L3.4 8.2 L5.3 9.4 M6.7 7 L8.6 8.2 L6.7 9.4" fill="none" stroke="#e39b16" stroke-width="1.1"/></svg><div class="r" style="left:0;top:526.88px;width:550px;height:23.42px;background:#f5f5f5"></div><div class="t" style="left:26.80px;top:528.98px;font-size:13px;color:#202124;font-weight:normal;font-family:'Liberation Sans', sans-serif;transform:scaleX(0.9917);transform-origin:0 0;">dialog.js</div><svg class="r" style="left:7.5px;top:531.88px" width="12" height="14" viewBox="0 0 12 14"><rect x="0.8" y="0.8" width="10.4" height="12.4" rx="1.5" fill="#fdf7d9" stroke="#eed67a" stroke-width="1.3"/><path d="M5.3 7 L3.4 8.2 L5.3 9.4 M6.7 7 L8.6 8.2 L6.7 9.4" fill="none" stroke="#e39b16" stroke-width="1.1"/></svg><div class="r" style="left:0;top:550.00px;width:550px;height:23.42px;background:#ffffff"></div><div class="t" style="left:25.79px;top:552.10px;font-size:13px;color:#202124;font-weight:normal;font-family:'Liberation Sans', sans-serif;transform:scaleX(1.0114);transform-origin:0 0;">report_dialog.js</div><svg class="r" style="left:7.5px;top:555.00px" width="12" height="14" viewBox="0 0 12 14"><rect x="0.8" y="0.8" width="10.4" height="12.4" rx="1.5" fill="#fdf7d9" stroke="#eed67a" stroke-width="1.3"/><path d="M5.3 7 L3.4 8.2 L5.3 9.4 M6.7 7 L8.6 8.2 L6.7 9.4" fill="none" stroke="#e39b16" stroke-width="1.1"/></svg><div class="r" style="left:0;top:573.12px;width:550px;height:23.42px;background:#f5f5f5"></div><div class="t" style="left:25.81px;top:575.22px;font-size:13px;color:#202124;font-weight:normal;font-family:'Liberation Sans', sans-serif;transform:scaleX(0.9929);transform-origin:0 0;">report_dialog.css</div><svg class="r" style="left:7.5px;top:578.12px" width="12" height="14" viewBox="0 0 12 14"><rect x="0.8" y="0.8" width="10.4" height="12.4" rx="1.5" fill="#f6eefe" stroke="#b58de6" stroke-width="1.4"/><path d="M3.2 10 L8.6 3.6" stroke="#8f4fd6" stroke-width="1.4"/></svg><div class="r" style="left:0;top:596.24px;width:550px;height:23.42px;background:#ffffff"></div><div class="t" style="left:25.79px;top:598.34px;font-size:13px;color:#202124;font-weight:normal;font-family:'Liberation Sans', sans-serif;transform:scaleX(1.0098);transform-origin:0 0;">bundle.js</div><svg class="r" style="left:7.5px;top:601.24px" width="12" height="14" viewBox="0 0 12 14"><rect x="0.8" y="0.8" width="10.4" height="12.4" rx="1.5" fill="#fdf7d9" stroke="#eed67a" stroke-width="1.3"/><path d="M5.3 7 L3.4 8.2 L5.3 9.4 M6.7 7 L8.6 8.2 L6.7 9.4" fill="none" stroke="#e39b16" stroke-width="1.1"/></svg><div class="r" style="left:0;top:619.36px;width:550px;height:23.42px;background:#f5f5f5"></div><div class="t" style="left:25.81px;top:621.46px;font-size:13px;color:#202124;font-weight:normal;font-family:'Liberation Sans', sans-serif;transform:scaleX(0.9860);transform-origin:0 0;">index.js</div><svg class="r" style="left:7.5px;top:624.36px" width="12" height="14" viewBox="0 0 12 14"><rect x="0.8" y="0.8" width="10.4" height="12.4" rx="1.5" fill="#fdf7d9" stroke="#eed67a" stroke-width="1.3"/><path d="M5.3 7 L3.4 8.2 L5.3 9.4 M6.7 7 L8.6 8.2 L6.7 9.4" fill="none" stroke="#e39b16" stroke-width="1.1"/></svg><div class="r" style="left:0;top:642.48px;width:550px;height:23.42px;background:#ffffff"></div><div class="t" style="left:25.80px;top:644.58px;font-size:13px;color:#202124;font-weight:normal;font-family:'Liberation Sans', sans-serif;transform:scaleX(0.9982);transform-origin:0 0;">p2647348768.webp</div><svg class="r" style="left:8px;top:648.98px" width="11" height="11" viewBox="0 0 11 11"><defs><linearGradient id="g2647348768" x1="0" y1="0" x2="1" y2="1"><stop offset="0" stop-color="#5a2436"/><stop offset="1" stop-color="#2a0c18"/></linearGradient></defs><rect x="0.5" y="0.5" width="9.5" height="9" fill="url(#g2647348768)"/></svg><div class="r" style="left:0;top:665.60px;width:550px;height:23.42px;background:#f5f5f5"></div><div class="t" style="left:25.80px;top:667.70px;font-size:13px;color:#202124;font-weight:normal;font-family:'Liberation Sans', sans-serif;transform:scaleX(0.9982);transform-origin:0 0;">p2640249900.webp</div><svg class="r" style="left:8px;top:672.10px" width="11" height="11" viewBox="0 0 11 11"><defs><linearGradient id="g2640249900" x1="0" y1="0" x2="1" y2="1"><stop offset="0" stop-color="#9a8a72"/><stop offset="1" stop-color="#4a4038"/></linearGradient></defs><rect x="0.5" y="0.5" width="9.5" height="9" fill="url(#g2640249900)"/></svg><div class="r" style="left:0;top:688.72px;width:550px;height:23.42px;background:#ffffff"></div><div class="t" style="left:25.80px;top:690.82px;font-size:13px;color:#202124;font-weight:normal;font-family:'Liberation Sans', sans-serif;transform:scaleX(0.9982);transform-origin:0 0;">p2647348769.webp</div><svg class="r" style="left:8px;top:695.22px" width="11" height="11" viewBox="0 0 11 11"><defs><linearGradient id="g2647348769" x1="0" y1="0" x2="1" y2="1"><stop offset="0" stop-color="#35555f"/><stop offset="1" stop-color="#15262e"/></linearGradient></defs><rect x="0.5" y="0.5" width="9.5" height="9" fill="url(#g2647348769)"/></svg><div class="r" style="left:550px;top:203px;width:18px;height:508px;background:#f1f1f1;"></div><svg class="r" style="left:552px;top:208px" width="12" height="8" viewBox="0 0 12 8"><path d="M2 6.5 L6 2.5 L10 6.5 Z" fill="#a3a3a3"/></svg><div class="r" style="left:552px;top:221px;width:13px;height:22px;background:#c1c1c1;"></div><div class="r" style="left:566px;top:173px;width:3px;height:538px;background:#d3d3d3;"></div><div class="r" style="left:567px;top:173px;width:1px;height:538px;background:#bdbdbd;"></div><div class="r" style="left:569px;top:173px;width:1142px;height:29px;background:#f1f3f4;"></div><div class="r" style="left:569px;top:202px;width:1142px;height:1px;background:#cbcdd0;"></div><svg class="r" style="left:578px;top:182px" width="11" height="11" viewBox="0 0 11 11"><path d="M1.8 1.8 L9.2 9.2 M9.2 1.8 L1.8 9.2" stroke="#5f6368" stroke-width="1.3"/></svg><div class="t" style="left:605.01px;top:178.70px;font-size:13px;color:#202124;font-weight:normal;font-family:'Liberation Sans', sans-serif;transform:scaleX(0.9917);transform-origin:0 0;">Headers</div><div class="t" style="left:674.31px;top:178.70px;font-size:13px;color:#5f6368;font-weight:normal;font-family:'Liberation Sans', sans-serif;transform:scaleX(0.9933);transform-origin:0 0;">Preview</div><div class="t" style="left:740.64px;top:178.70px;font-size:13px;color:#5f6368;font-weight:normal;font-family:'Liberation Sans', sans-serif;transform:scaleX(0.9632);transform-origin:0 0;">Response</div><div class="t" style="left:817.33px;top:178.70px;font-size:13px;color:#5f6368;font-weight:normal;font-family:'Liberation Sans', sans-serif;transform:scaleX(1.0690);transform-origin:0 0;">Initiator</div><div class="t" style="left:885.50px;top:178.70px;font-size:13px;color:#5f6368;font-weight:normal;font-family:'Liberation Sans', sans-serif;transform:scaleX(1.0263);transform-origin:0 0;">Timing</div><div class="t" style="left:947.00px;top:178.70px;font-size:13px;color:#5f6368;font-weight:normal;font-family:'Liberation Sans', sans-serif;transform:scaleX(0.9723);transform-origin:0 0;">Cookies</div><div class="r" style="left:595px;top:201px;width:70px;height:2px;background:#2862c2;"></div><div class="r" style="left:569px;top:203px;width:1142px;height:508px;background:#ffffff;"></div><div class="t" style="left:597.00px;top:202.02px;font-size:13.8px;color:#303030;font-weight:bold;font-family:'Liberation Sans', sans-serif;transform:scaleX(0.9171);transform-origin:0 0;">Accept-Encoding:</div><div class="t" style="left:712.70px;top:202.84px;font-size:12px;color:#222;font-weight:normal;font-family:'Liberation Mono', monospace;letter-spacing:0.05px;white-space:pre;-webkit-text-stroke:0.25px #222transform:scaleX(0.9894);transform-origin:0 0;">gzip, deflate, br</div><div class="t" style="left:597.00px;top:226.02px;font-size:13.8px;color:#303030;font-weight:bold;font-family:'Liberation Sans', sans-serif;transform:scaleX(0.9252);transform-origin:0 0;">Accept-Language:</div><div class="t" style="left:715.50px;top:226.84px;font-size:12px;color:#222;font-weight:normal;font-family:'Liberation Mono', monospace;letter-spacing:0.05px;white-space:pre;-webkit-text-stroke:0.25px #222transform:scaleX(0.9861);transform-origin:0 0;">zh-CN,zh;q=0.9</div><div class="t" style="left:597.00px;top:250.02px;font-size:13.8px;color:#303030;font-weight:bold;font-family:'Liberation Sans', sans-serif;transform:scaleX(0.9212);transform-origin:0 0;">Cache-Control:</div><div class="t" style="left:695.90px;top:250.84px;font-size:12px;color:#222;font-weight:normal;font-family:'Liberation Mono', monospace;letter-spacing:0.05px;white-space:pre;-webkit-text-stroke:0.25px #222transform:scaleX(0.9923);transform-origin:0 0;">max-age=0</div><div class="t" style="left:597.00px;top:273.62px;font-size:13.8px;color:#303030;font-weight:bold;font-family:'Liberation Sans', sans-serif;transform:scaleX(0.9200);transform-origin:0 0;">Connection:</div><div class="t" style="left:677.40px;top:274.44px;font-size:12px;color:#222;font-weight:normal;font-family:'Liberation Mono', monospace;letter-spacing:0.05px;white-space:pre;-webkit-text-stroke:0.25px #222transform:scaleX(0.9972);transform-origin:0 0;">keep-alive</div><div class="r" style="left:569px;top:296px;width:1142px;height:206.5px;background:#1a73e8;"></div><div class="r" style="left:650px;top:300px;width:1061px;height:19px;background:#60a0ee;"></div><div class="r" style="left:597px;top:319px;width:1114px;height:161px;background:#60a0ee;"></div><div class="r" style="left:597px;top:480px;width:558px;height:22.5px;background:#60a0ee;"></div><div class="t" style="left:597.00px;top:298.02px;font-size:13.8px;color:#fff;font-weight:bold;font-family:'Liberation Sans', sans-serif;transform:scaleX(0.9200);transform-origin:0 0;">Cookie:</div><div class="t" style="left:650.00px;top:298.84px;font-size:12px;color:#fff;font-weight:normal;font-family:'Liberation Mono', monospace;letter-spacing:0.05px;white-space:pre;-webkit-text-stroke:0.3px #fff">douban-fav-remind=1; ll="118226"; __utmv=30149280.19557; push_doumail_num=0; push_noty_num=0; _vwo_uuid_v2=DB21AF7C4F97E0BE09F3DFFE1BFE083FA|a0f90</div><div class="t" style="left:597.00px;top:321.84px;font-size:12px;color:#fff;font-weight:normal;font-family:'Liberation Mono', monospace;letter-spacing:0.05px;white-space:pre;-webkit-text-stroke:0.3px #fff">791ddf9b266634536715f0dbb34; _vwo_uuid_v2=DB21AF7C4F97E0BE09F3DFFE1BFE083FA|a0f90791ddf9b266634536715f0dbb34; gr_user_id=3eac66b6-ec4b-4fff-ae1f-d45f943a</div><div class="t" style="left:597.00px;top:344.84px;font-size:12px;color:#fff;font-weight:normal;font-family:'Liberation Mono', monospace;letter-spacing:0.05px;white-space:pre;-webkit-text-stroke:0.3px #fff">f9c8; bid=qkrgDzy7GlI; __yadk_uid=AWHoVEF6620SKIju6HH0X8KutuZU4bcK; __gads=ID=5f5b3995f8db9c18-2266ba552bd300c6:T=1652458312:RT=1652458312:S=ALNI_MY3uhBx</div><div class="t" style="left:597.00px;top:367.84px;font-size:12px;color:#fff;font-weight:normal;font-family:'Liberation Mono', monospace;letter-spacing:0.05px;white-space:pre;-webkit-text-stroke:0.3px #fff">U0oco3bf4SmsyV9F5gTzLw; __utmc=30149280; __utmc=223695111; _ga_RXNMP372GL=GS1.1.1655993005.1.1.1655993048.17; _ga=GA1.2.776213887.1618717537; _gid=GA1.2.</div><div class="t" style="left:597.00px;top:390.84px;font-size:12px;color:#fff;font-weight:normal;font-family:'Liberation Mono', monospace;letter-spacing:0.05px;white-space:pre;-webkit-text-stroke:0.3px #fff">768627159.1656111980; dbcl2="195572603:XLOzVIKAbBQ"; ck=yEre; __utmz=30149280.1656166979.364.202.utmcsr=accounts.douban.com|utmccn=(referral)|utmcmd=refe</div><div class="t" style="left:597.00px;top:413.84px;font-size:12px;color:#fff;font-weight:normal;font-family:'Liberation Mono', monospace;letter-spacing:0.05px;white-space:pre;-webkit-text-stroke:0.3px #fff">rral|utmcct=/; __utmz=223695111.1656166979.314.227.utmcsr=accounts.douban.com|utmccn=(referral)|utmcmd=referral|utmcct=/; ct=y; _pk_ref.100001.4cf6=%5B%2</div><div class="t" style="left:597.00px;top:436.84px;font-size:12px;color:#fff;font-weight:normal;font-family:'Liberation Mono', monospace;letter-spacing:0.05px;white-space:pre;-webkit-text-stroke:0.3px #fff">2%22%2C%22%22%2C1656228914%2C%22https%3A%2F%2Faccounts.douban.com%2F%22%5D; _pk_id.100001.4cf6=be1d85ec8558590f.1618783654.311.1656228914.1656169536.; ap</div><div class="t" style="left:597.00px;top:459.84px;font-size:12px;color:#fff;font-weight:normal;font-family:'Liberation Mono', monospace;letter-spacing:0.05px;white-space:pre;-webkit-text-stroke:0.3px #fff">_v=0,6.0; __utma=30149280.776213887.1618717537.1656169522.1656228914.366; __utma=223695111.1471794644.1618783654.1656169522.1656228914.316; __gpi=UID=000</div><div class="t" style="left:597.00px;top:482.84px;font-size:12px;color:#fff;font-weight:normal;font-family:'Liberation Mono', monospace;letter-spacing:0.05px;white-space:pre;-webkit-text-stroke:0.3px #fff">0048315a1f0f3:T=1649153939:RT=1656228915:S=ALNI_MY6oIMXQpJfYAn2cCf67w8dHa-Ang</div><div class="r" style="left:638px;top:293px;width:1054.5px;height:199.7px;border:7px solid #f33838;box-sizing:content-box"></div><div class="t" style="left:596.02px;top:505.52px;font-size:13.8px;color:#303030;font-weight:bold;font-family:'Liberation Sans', sans-serif;transform:scaleX(0.9788);transform-origin:0 0;">Host:</div><div class="t" style="left:636.70px;top:506.34px;font-size:12px;color:#222;font-weight:normal;font-family:'Liberation Mono', monospace;letter-spacing:0.05px;white-space:pre;-webkit-text-stroke:0.25px #222transform:scaleX(0.9940);transform-origin:0 0;">movie.douban.com</div><div class="t" style="left:597.00px;top:530.22px;font-size:13.8px;color:#303030;font-weight:bold;font-family:'Liberation Sans', sans-serif;transform:scaleX(0.9176);transform-origin:0 0;">sec-ch-ua:</div><div class="t" style="left:667.00px;top:531.04px;font-size:12px;color:#222;font-weight:normal;font-family:'Liberation Mono', monospace;letter-spacing:0.05px;white-space:pre;-webkit-text-stroke:0.25px #222">" Not A;Brand";v="99", "Chromium";v="96", "Google Chrome";v="96"</div><div class="t" style="left:597.00px;top:554.22px;font-size:13.8px;color:#303030;font-weight:bold;font-family:'Liberation Sans', sans-serif;transform:scaleX(0.9350);transform-origin:0 0;">sec-ch-ua-mobile:</div><div class="t" style="left:715.50px;top:555.04px;font-size:12px;color:#222;font-weight:normal;font-family:'Liberation Mono', monospace;letter-spacing:0.05px;white-space:pre;-webkit-text-stroke:0.25px #222transform:scaleX(0.9571);transform-origin:0 0;">?0</div><div class="t" style="left:597.00px;top:578.02px;font-size:13.8px;color:#303030;font-weight:bold;font-family:'Liberation Sans', sans-serif;transform:scaleX(0.9477);transform-origin:0 0;">sec-ch-ua-platform:</div><div class="t" style="left:726.50px;top:578.84px;font-size:12px;color:#222;font-weight:normal;font-family:'Liberation Mono', monospace;letter-spacing:0.05px;white-space:pre;-webkit-text-stroke:0.25px #222transform:scaleX(1.0016);transform-origin:0 0;">"Windows"</div><div class="t" style="left:597.00px;top:602.62px;font-size:13.8px;color:#303030;font-weight:bold;font-family:'Liberation Sans', sans-serif;transform:scaleX(0.9183);transform-origin:0 0;">Sec-Fetch-Dest:</div><div class="t" style="left:700.50px;top:603.44px;font-size:12px;color:#222;font-weight:normal;font-family:'Liberation Mono', monospace;letter-spacing:0.05px;white-space:pre;-webkit-text-stroke:0.25px #222transform:scaleX(0.9895);transform-origin:0 0;">document</div><div class="t" style="left:597.00px;top:626.52px;font-size:13.8px;color:#303030;font-weight:bold;font-family:'Liberation Sans', sans-serif;transform:scaleX(0.9409);transform-origin:0 0;">Sec-Fetch-Mode:</div><div class="t" style="left:707.41px;top:627.34px;font-size:12px;color:#222;font-weight:normal;font-family:'Liberation Mono', monospace;letter-spacing:0.05px;white-space:pre;-webkit-text-stroke:0.25px #222transform:scaleX(0.9912);transform-origin:0 0;">navigate</div><div class="t" style="left:597.00px;top:650.52px;font-size:13.8px;color:#303030;font-weight:bold;font-family:'Liberation Sans', sans-serif;transform:scaleX(0.9172);transform-origin:0 0;">Sec-Fetch-Site:</div><div class="t" style="left:694.71px;top:651.34px;font-size:12px;color:#222;font-weight:normal;font-family:'Liberation Mono', monospace;letter-spacing:0.05px;white-space:pre;-webkit-text-stroke:0.25px #222transform:scaleX(0.9929);transform-origin:0 0;">none</div><div class="t" style="left:597.00px;top:674.32px;font-size:13.8px;color:#303030;font-weight:bold;font-family:'Liberation Sans', sans-serif;transform:scaleX(0.9171);transform-origin:0 0;">Sec-Fetch-User:</div><div class="t" style="left:701.30px;top:675.14px;font-size:12px;color:#222;font-weight:normal;font-family:'Liberation Mono', monospace;letter-spacing:0.05px;white-space:pre;-webkit-text-stroke:0.25px #222transform:scaleX(0.9071);transform-origin:0 0;">?1</div><div class="t" style="left:596.07px;top:699.22px;font-size:13.8px;color:#303030;font-weight:bold;font-family:'Liberation Sans', sans-serif;transform:scaleX(0.9316);transform-origin:0 0;">Upgrade-Insecure-Requests:</div><div class="t" style="left:778.40px;top:700.04px;font-size:12px;color:#222;font-weight:normal;font-family:'Liberation Mono', monospace;letter-spacing:0.05px;white-space:pre;-webkit-text-stroke:0.25px #222">1</div><svg class="r" style="left:0;top:0" width="1711" height="711" viewBox="0 0 1711 711"><path d="M114.5 215.8 L130.8 208.2 L130.6 211.6 L205 214.3 L237 216.2 L205 218.4 L130.6 219.9 L129.9 223.8 Z" fill="#f33636"/><path d="M634.4 205.3 L647.7 216.5 L643.2 219 L656.8 247.2 L655.2 248.5 L636.2 222 L634.9 223.4 Z" fill="#f33636"/></svg></body></html>
